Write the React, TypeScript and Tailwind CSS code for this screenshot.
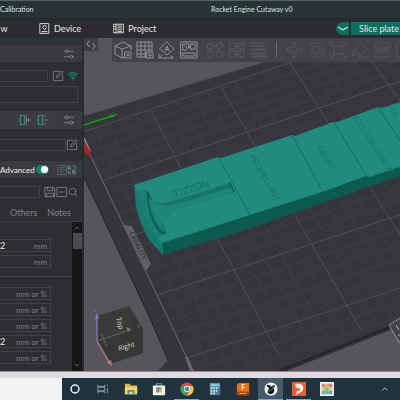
import type { ReactNode } from "react";
import { ChevronDown, ChevronUp, Search } from "lucide-react";

type Point = [number, number];

// Endpoints of the major plate lines, back edge to front edge
const COLUMNS: [Point, Point][] = [
    [[80, 133], [187, 358]],
    [[151, 111], [266, 331]],
    [[221, 87], [348, 307]],
    [[290, 63], [428, 278]],
    [[358, 41], [506, 252]],
    [[424, 18], [582, 228]],
];
const ROWS = [0, 0.21, 0.46, 0.72, 1];

const mix = (a: number, b: number, t: number) => a + (b - a) * t;

function platePoint(u: number, t: number): Point {
    const i = Math.min(Math.floor(u), COLUMNS.length - 2);
    const f = u - i;
    const [a, b] = COLUMNS[i];
    const [c, d] = COLUMNS[i + 1];
    return [
        mix(mix(a[0], b[0], t), mix(c[0], d[0], t), f),
        mix(mix(a[1], b[1], t), mix(c[1], d[1], t), f),
    ];
}

function PlateGrid() {
    const lines: { from: Point; to: Point; major: boolean }[] = [];
    for (let i = 0; i <= 25; i++) {
        lines.push({ from: platePoint(i / 5, 0), to: platePoint(i / 5, 1.11), major: i % 5 === 0 });
    }
    for (let i = 0; i <= 22; i++) {
        const r = Math.floor(i / 5);
        const t = i > 20 ? 1 + (i - 20) * 0.055 : r === 4 ? 1 : mix(ROWS[r], ROWS[r + 1], (i % 5) / 5);
        lines.push({ from: platePoint(0, t), to: platePoint(5, t), major: i % 5 === 0 });
    }
    return (
        <g>
            {lines.map(({ from, to, major }, i) => (
                <line
                    key={i}
                    x1={from[0]}
                    y1={from[1]}
                    x2={to[0]}
                    y2={to[1]}
                    stroke={major ? "#535158" : "#47454c"}
                    strokeWidth={major ? 0.9 : 0.6}
                />
            ))}
        </g>
    );
}

function Model() {
    return (
        <g>
            <path d="M134 185L137 207L146 233L152 244L163 255L242 231L400 176V160L300 150L160 200Z" fill="#0d5b50" />
            <path d="M134 185L136 207Q140 224 150 241L163 255L162 242L158 238L150 222L140 190Z" fill="#177c6f" />
            <path
                d="M134 185L218 157L221 158L292 135L295 136L333 122L337 122L378 107L382 108L400 102V167L369 177L366 176L325 191L322 192L253 214L250 215L162 243L158 239L160 235L167 233L163 225L148 191L138 192Z"
                fill="#208c7d"
            />
            <path d="M138 192L147 190L149 198L153 204L161 223L167 233L161 235L158 239C148 228 141 212 138 192Z" fill="#1a8073" />
            <path d="M147 190L149 198C149 210 155 223 161 230L167 233L161 235C152 224 146 208 147 190Z" fill="#0f6056" />
            <path d="M149 198L153 201C160 204 166 203 173 201L230 183L234 192L176 209C171 211 169 215 166 219L161 224C156 218 151 210 149 198Z" fill="#1f8577" />
            <path d="M153 201C160 204 166 203 173 201L230 183L232 187L174 205C166 207 159 206 153 201Z" fill="#187469" />
            <path d="M166 219C169 215 171 211 176 209L234 192" fill="none" stroke="#1b7b6f" strokeWidth="0.6" />
            <path d="M230 183L234 192" stroke="#0d5249" strokeWidth="1.2" />
            <path d="M218 157L250 215M292 135L323 192M334 122L367 177M378 107L404 147" fill="none" stroke="#126358" strokeWidth="0.8" />
            <g fill="#1a7166" className="font-['Liberation_Sans']">
                <text transform="translate(208 180) rotate(163)" fontSize="10">NOZZLE</text>
                <text transform="translate(249 156) rotate(60)" fontSize="8">PROPELLANT</text>
                <text transform="translate(317 148) rotate(58)" fontSize="8">DELAY</text>
                <text transform="translate(353 118) rotate(57)" fontSize="7">EJECTION CHARGE</text>
                <text transform="translate(390 110) rotate(57)" fontSize="6">CO</text>
            </g>
        </g>
    );
}

function ViewCube() {
    return (
        <g>
            <path d="M97 316L129 306L143 329L143 353L110 364L97 341Z" fill="#3a3b39" />
            <path d="M97 341L110 364L143 353V329L129 306L132 328Z" fill="#373836" />
            <path d="M97 341L130 330M101 334L107 346M138 328L140 324" fill="none" stroke="#6c736d" strokeWidth="0.8" />
            <path d="M126 327L131 329L128 332Z" fill="#6c8070" />
            <path d="M97 341V317" stroke="#8079c8" strokeWidth="1.3" />
            <path d="M97 313L99 319H95Z" fill="#8079c8" />
            <path d="M97 341L109 362" stroke="#c97f7b" strokeWidth="1.3" />
            <path d="M112 366L107 362L111 360Z" fill="#c97f7b" />
            <g className="font-['Open_Sans']" fill="#d6d6d2">
                <text x="94" y="312" fontSize="6" fill="#8079c8">z</text>
                <text transform="translate(116 318) rotate(76)" fontSize="7">Top</text>
                <text transform="translate(119 351) rotate(-16)" fontSize="7">Right</text>
            </g>
        </g>
    );
}

function Scene() {
    return (
        <svg
            viewBox="84 38 316 333"
            preserveAspectRatio="xMinYMin slice"
            className="absolute inset-0 size-full"
            role="img"
            aria-label="Build plate"
        >
            <rect x="84" y="38" width="316" height="333" fill="#57555b" />
            <path d="M84 116L265 62L345 38H400V326L282 371H158L168 360L150 318L84 177Z" fill="#37353c" />
            <path d="M84 177L150 318L168 360" fill="none" stroke="#29272d" strokeWidth="1.2" />
            <path d="M276 371L400 322V326L286 371Z" fill="#242328" />
            <path d="M282 371L400 325" stroke="#3f3e43" strokeWidth="0.7" />
            <PlateGrid />
            <path d="M90 155L187 358L193 371" fill="none" stroke="#68666b" strokeWidth="0.9" />
            <path d="M185 357L188 357L194 371H190Z" fill="#69676b" />
            <path d="M123 225L132 226L151 264L146 271Z" fill="#605f64" />
            <text transform="translate(129 233) rotate(64)" fontSize="7" fill="#29282d" className="font-['Open_Sans']">
                CREALITY
            </text>
            <path d="M84 125L112 116" stroke="#0aa80f" strokeWidth="1.6" />
            <path d="M118 114L111 118L110 115Z" fill="#0aa80f" />
            <path d="M84 138L90 151" stroke="#8d8b8e" strokeWidth="1.4" />
            <path d="M84 143L89 149L91 157L86 154L84 149Z" fill="#b31d1c" />
            <Model />
            <path d="M404 316L390 324Q389 325 390 327L399 342H404Z" fill="#444348" stroke="#a09fa3" strokeWidth="0.9" />
            <path d="M396 325L399 330M398 336L402 333" stroke="#b5b4b8" strokeWidth="1" />
            <ViewCube />
        </svg>
    );
}

function Icon({ children, className = "size-3" }: { children: ReactNode; className?: string }) {
    return (
        <svg
            viewBox="0 0 18 18"
            fill="none"
            stroke="currentColor"
            strokeWidth="1"
            strokeLinecap="round"
            strokeLinejoin="round"
            className={`shrink-0 ${className}`}
            aria-hidden="true"
        >
            {children}
        </svg>
    );
}

const tools = [
    { name: "Add", body: <path d="M10 16L8 17L1 13V5L9 1L17 5V9M1 5L8 8L17 5M8 8V17M11 11H17V17H11ZM14 12.500V15.500M12.500 14H15.500" /> },
    { name: "Add plate", body: <path d="M10 16H1V1H16V10M5 1V16M9 1V16M13 1V10M1 5H16M1 9H16M1 13H10M11 11H17V17H11ZM14 12.500V15.500M12.500 14H15.500" /> },
    { name: "Auto orient", body: <path d="M9 1L16 8L9 14L2 8ZM7 10L9 5L11 10M7.500 8.500H10.500M1 13V17H15M1 17L4 14M13 15L15 17L13 18" /> },
    { name: "Arrange", body: <path d="M1 1H17V17H1ZM3 3H9V6L6 9H3ZM11 3H15V8H11ZM3 12H15V15H3ZM5 5L8 8M8 5L12 9" /> },
];

const dimTools = [
    { name: "Split to objects", body: <path d="M2 3H7V8H2ZM11 3L15 1L17 5L12 8ZM2 11H7V16H2ZM11 11H16V16H11ZM7 5H11M4 8V11M13 8V11" /> },
    { name: "Split to parts", body: <path d="M2 2H8V8H2ZM10 2H16V8H10ZM2 10H8V16H2ZM10 10H16V16H10ZM5 5H13M5 13H13" /> },
    { name: "Layer height", body: <path d="M1 2H17M1 5H17M1 8H17M1 9H17M1 12H17M1 13H17M1 16H17M1 15H17" /> },
];

const editTools = [
    { name: "Move", body: <path d="M6 6H12V12H6ZM9 1V4M9 14V17M1 9H4M14 9H17M7 3L9 1L11 3M7 15L9 17L11 15M3 7L1 9L3 11M15 7L17 9L15 11" /> },
    { name: "Rotate", body: <path d="M3 5A7.500 7.500 0 1 1 3 13M3 1V5H7M9 5L13 7V11L9 13L5 11V7Z" /> },
    { name: "Scale", body: <path d="M5 5H13V13H5ZM1 5V1H5M13 1H17V5M17 13V17H13M5 17H1V13M1 1L5 5M17 1L13 5M1 17L5 13M17 17L13 13" /> },
    { name: "Lay on face", body: <path d="M10 2L16 8L9 14L4 9ZM2 9L1 14H6M7 16H17M4 9L2 11" /> },
    { name: "Cut", body: <path d="M2 2H16V7H2ZM2 11H16V16H2ZM1 9H17" /> },
    { name: "Support", body: <path d="M2 2H16V16H2ZM6 2V16" /> },
];

function Toolbar() {
    return (
        <div className="ml-3.5 flex h-6 min-w-0 flex-1 items-center gap-1 overflow-hidden bg-[#424247] pl-0.5">
            {tools.map((tool) => (
                <button key={tool.name} aria-label={tool.name} className="text-[#919195]">
                    <Icon className="size-[18px]">{tool.body}</Icon>
                </button>
            ))}
            <div className="ml-1 flex gap-1">
                {dimTools.map((tool) => (
                    <button key={tool.name} aria-label={tool.name} className="text-[#57575c]">
                        <Icon className="size-[18px]">{tool.body}</Icon>
                    </button>
                ))}
            </div>
            <div className="mx-1 h-4 w-px shrink-0 bg-[#68686d]" />
            {editTools.map((tool) => (
                <button key={tool.name} aria-label={tool.name} className="text-[#545459]">
                    <Icon className="size-[18px]">{tool.body}</Icon>
                </button>
            ))}
        </div>
    );
}

const SlidersIcon = () => (
    <Icon>
        <path d="M2 5H3M8 5H16M2 13H10M15 13H16" />
        <circle cx="5.500" cy="5" r="2.300" />
        <circle cx="12.500" cy="13" r="2.300" />
    </Icon>
);

const EditIcon = () => (
    <Icon>
        <path d="M11 2H2V16H16V7M7 11L8 8L15 1L17 3L10 10Z" />
    </Icon>
);

function IconButton({ label, children }: { label: string; children: ReactNode }) {
    return (
        <button aria-label={label} className="shrink-0 text-[#9a9a9d]">
            {children}
        </button>
    );
}

const fieldGroups = [
    [
        { name: "Layer height", value: "2", unit: "mm" },
        { name: "First layer height", value: "", unit: "mm" },
    ],
    [
        { name: "Default", value: "", unit: "mm or %" },
        { name: "First layer", value: "", unit: "mm or %" },
        { name: "Outer wall", value: "", unit: "mm or %" },
        { name: "Inner wall", value: "2", unit: "mm or %" },
        { name: "Top surface", value: "", unit: "mm or %" },
    ],
];

function Sidebar() {
    return (
        <aside className="flex w-[84px] shrink-0 flex-col border-r-2 border-[#24302f] bg-[#2d2d32]">
            <div className="h-[7px] bg-[#283435]" />
            <div className="flex h-[17px] items-center justify-end bg-[#3a3a3f] pr-[7px]">
                <IconButton label="Printer settings"><SlidersIcon /></IconButton>
            </div>
            <div className="mt-2 flex h-3 items-center gap-1 pr-1">
                <select aria-label="Printer" className="h-3 w-[51px] appearance-none border border-l-0 border-[#414146]" />
                <IconButton label="Edit printer"><EditIcon /></IconButton>
                <button aria-label="Connection" className="text-[#12806e]">
                    <Icon className="size-2.5">
                        <path d="M1 6Q9 -1 17 6M4 9Q9 4 14 9M7 12Q9 10 11 12M9 13V16" strokeWidth="2.500" />
                    </Icon>
                </button>
            </div>
            <div className="mt-1 mr-1 h-[17px] border border-l-0 border-[#414146]" />
            <div className="mt-2 flex h-[18px] items-center justify-end gap-1.5 bg-[#3a3a3f] pr-[7px]">
                <IconButton label="Add filament">
                    <Icon><path d="M6 2H2V16H6M8 2V16" stroke="#2aa08c" strokeWidth="1.500" /><path d="M11 2V16M11 9H17M14 6V12" /></Icon>
                </IconButton>
                <IconButton label="Remove filament">
                    <Icon><path d="M6 2H2V16H6M8 2V16" stroke="#2aa08c" strokeWidth="1.500" /><path d="M10 3H13M10 9H17M10 15H13" /></Icon>
                </IconButton>
                <span className="w-0.5" />
                <IconButton label="Filament settings"><SlidersIcon /></IconButton>
            </div>
            <div className="mt-[9px] flex h-[13px] items-center">
                <select aria-label="Filament" className="h-3 w-[66px] shrink-0 appearance-none border border-l-0 border-[#414146]" />
                <IconButton label="Edit filament"><EditIcon /></IconButton>
            </div>
            <div className="mt-2.5 flex h-[17px] items-center bg-[#3a3a3f]">
                <label className="flex items-center gap-0.5 text-[8px] text-[#f0f0f0]">
                    <span className="w-[34px]">Advanced</span>
                    <input type="checkbox" defaultChecked className="peer sr-only" />
                    <span className="flex h-[9px] w-[13px] items-center justify-end rounded-full bg-[#12806e] pr-px">
                        <span className="size-[7px] rounded-full bg-white" />
                    </span>
                </label>
                <button aria-label="Compare presets" className="ml-2 text-[#5f8d85]">
                    <Icon className="size-2.5"><path d="M1 1H17V17H1ZM5 5H13M5 9H13M5 13H10" /></Icon>
                </button>
                <button aria-label="Search objects" className="text-[#5f9d91]">
                    <Icon className="size-2.5"><path d="M2 8V4L4 1L6 4V8M2 6H6M11 2H15V6M3 11V15H7M11 9H14V12H11ZM11 12H15V16H11Z" strokeWidth="1.500" /></Icon>
                </button>
            </div>
            <div className="mt-2 flex h-3 items-center">
                <select aria-label="Process" className="mr-1 h-3 w-10 appearance-none border border-l-0 border-[#414146]" />
                <IconButton label="Save"><Icon><path d="M2 2H14L16 4V16H2ZM5 2V7H13V2M4 16V11H14V16" /></Icon></IconButton>
                <IconButton label="Delete"><Icon><path d="M2 2H16V16H2ZM5 9H13" /></Icon></IconButton>
                <IconButton label="Search"><Search className="size-2.5" strokeWidth={1.5} /></IconButton>
            </div>
            <div className="mt-1.5 flex h-[18px] items-center gap-2.5 border-b border-[#3c3c41] pl-2.5 text-[9px] text-[#828287]">
                <button>Others</button>
                <button>Notes</button>
            </div>
            <div className="flex min-h-0 flex-1 overflow-hidden">
                <div className="min-w-0 flex-1 pt-[17px]">
                    {fieldGroups.map((fields, i) => (
                        <div key={i} className={i > 0 ? "mt-2 border-t border-[#434348] pt-2.5" : ""}>
                            {fields.map((field) => (
                                <label key={field.name} className="mb-[3px] flex h-[13px] w-[51px] items-center border border-l-0 border-[#414146] pr-[3px] text-[8px] text-[#808085]">
                                    <input aria-label={field.name} defaultValue={field.value} className="w-0 min-w-0 flex-1 text-[9px] text-[#ececec] outline-none" />
                                    <span className="whitespace-nowrap">{field.unit}</span>
                                </label>
                            ))}
                        </div>
                    ))}
                </div>
                <div className="flex w-2.5 flex-col items-center bg-[#161618] text-[#85858a]">
                    <ChevronUp className="mt-0.5 size-2" />
                    <div className="mt-px h-4 w-[9px] bg-[#4b4b50]" />
                    <ChevronDown className="mt-auto mb-0.5 size-2" />
                </div>
            </div>
        </aside>
    );
}

function NavBar() {
    return (
        <nav className="flex h-[19px] items-center bg-[#2c2c30] text-[9px] text-[#e6e6e6]">
            <button aria-label="Preview" className="w-2">w</button>
            <button className="ml-[31px] flex items-center gap-1">
                <Icon className="size-[11px]">
                    <path d="M2 1H16V17H2ZM5 14H13" strokeWidth="1.500" />
                    <path d="M9 11L6 7A3 3 0 1 1 12 7Z" strokeWidth="1.500" />
                </Icon>
                Device
            </button>
            <button className="ml-8 flex items-center gap-1">
                <Icon className="size-[11px]">
                    <path d="M1 2H17V16H1ZM5 2V16M8 5H14M8 8H14M8 11H14M8 14H14M2 6H4M2 10H4" strokeWidth="1.500" />
                </Icon>
                Project
            </button>
            <div className="ml-auto flex h-[13px] shrink-0 gap-0.5 whitespace-nowrap">
                <button aria-label="Slice options" className="flex w-[13px] items-center justify-center rounded-l-full bg-[#08705f]">
                    <Icon className="size-2.5"><path d="M1 6Q5 8 9 11Q13 8 17 6" strokeWidth="2" /></Icon>
                </button>
                <button className="bg-[#08705f] pr-px pl-2">Slice plate</button>
            </div>
        </nav>
    );
}

function AppIcon({ children }: { children: ReactNode }) {
    return (
        <svg viewBox="0 0 16 16" className="size-3.5" aria-hidden="true">
            {children}
        </svg>
    );
}

const apps = [
    { name: "Cortana", state: "", icon: <circle cx="8" cy="8" r="4.500" fill="none" stroke="#f2f5f6" strokeWidth="1.700" /> },
    { name: "Task view", state: "", icon: <path d="M2 3V5H10V3M2 13V11H10V13M2 6H10V10H2ZM13 3V5M13 7V13" fill="none" stroke="#9ba7ad" strokeWidth="1" /> },
    {
        name: "File Explorer",
        state: "",
        icon: (
            <>
                <path d="M1 2H6L8 4H15V14H1Z" fill="#e9b73c" />
                <path d="M1 6H15V14H1Z" fill="#f9d562" />
                <path d="M4 9H12V14H10V11H6V14H4Z" fill="#398dbb" />
            </>
        ),
    },
    {
        name: "Store",
        state: "",
        icon: (
            <>
                <path d="M5 5V2H11V5" fill="none" stroke="#43a4d2" strokeWidth="1.200" />
                <path d="M1 4H15V14Q15 15 14 15H2Q1 15 1 14Z" fill="#f0f3f4" />
                <path d="M5 6H8V9H5Z" fill="#e65536" />
                <path d="M8 6H11V9H8Z" fill="#7daf37" />
                <path d="M5 9H8V12H5Z" fill="#299bdb" />
                <path d="M8 9H11V12H8Z" fill="#eeb62c" />
            </>
        ),
    },
    {
        name: "Chrome",
        state: "open",
        icon: (
            <>
                <circle cx="8" cy="8" r="7.500" fill="#e04a3b" />
                <path d="M1.500 4.500L8 8L8 15.500A7.500 7.500 0 0 1 1.500 4.500Z" fill="#35a354" />
                <path d="M8 4.500H14.600A7.500 7.500 0 0 1 8 15.500L11.200 10Z" fill="#f5c735" />
                <circle cx="8" cy="8" r="3.600" fill="#f4f4f4" />
                <circle cx="8" cy="8" r="2.700" fill="#4280df" />
            </>
        ),
    },
    {
        name: "Calculator",
        state: "",
        icon: (
            <>
                <path d="M2 1H14V15H2Z" fill="#597e90" />
                <path d="M3 2H13V5H3Z" fill="#71cce5" />
                <path d="M3 6H5V8H3ZM6 6H8V8H6ZM9 6H11V8H9ZM3 9H5V11H3ZM6 9H8V11H6ZM9 9H11V11H9ZM3 12H5V14H3ZM6 12H8V14H6Z" fill="#d6e3e8" />
                <path d="M11 9H13V14H11Z" fill="#2475b9" />
            </>
        ),
    },
    {
        name: "Fusion",
        state: "",
        icon: (
            <>
                <path d="M3 1H15V14L13 15H1V3Z" fill="#ef6c10" />
                <path d="M1 11H15V15H1Z" fill="#a9410b" />
                <text x="6" y="9" fontSize="8" fontWeight="700" fill="#fff3e5">F</text>
                <path d="M4 13H12" stroke="#e2b197" strokeWidth="1" />
            </>
        ),
    },
    {
        name: "OrcaSlicer",
        state: "active",
        icon: (
            <>
                <circle cx="8" cy="8" r="7.500" fill="#f3f5f5" />
                <path d="M3 3L8 4L7 6L12 3Q13 5 11 7Q13 10 10 13Q6 15 4 12Q4 9 6 7Q3 6 3 3Z" fill="#14191c" />
                <path d="M5 11Q9 10 11 5" fill="none" stroke="#2ca18c" strokeWidth="1" />
            </>
        ),
    },
    {
        name: "PowerPoint",
        state: "open",
        icon: (
            <>
                <path d="M0 0H16V16H0Z" fill="#e95d36" />
                <path d="M4 2H9Q13 3 13 7Q13 11 9 12L4 15L6 10H9V7H6L4 5Z" fill="#fff4ec" />
            </>
        ),
    },
    {
        name: "Palette",
        state: "",
        icon: (
            <>
                <path d="M0 0H16V16H0Z" fill="#e8eeee" />
                <path d="M2 2H6V6H2Z" fill="#e9867a" />
                <path d="M6 2H10V6H6Z" fill="#f1ad70" />
                <path d="M10 2H14V6H10Z" fill="#dd7771" />
                <path d="M2 6H6V10H2Z" fill="#e4c45d" />
                <path d="M6 6H10V10H6Z" fill="#80bb72" />
                <path d="M10 6H14V10H10Z" fill="#e9cf65" />
                <path d="M2 10H6V14H2Z" fill="#70aed1" />
                <path d="M6 10H10V14H6Z" fill="#65b8b1" />
                <path d="M10 10H14V14H10Z" fill="#6d9ece" />
            </>
        ),
    },
];

const appStates: Record<string, string> = {
    "": "border-transparent",
    open: "border-[#6daae0]",
    active: "border-[#6daae0] bg-[#475a68]",
};

function Taskbar() {
    return (
        <footer className="flex h-[22px] items-stretch bg-[#1f323e]">
            <input aria-label="Search Windows" className="w-[62px] shrink-0 bg-[#f3f3f3]" />
            <div className="flex gap-[3px]">
                {apps.map((app) => (
                    <button key={app.name} aria-label={app.name} className={`flex w-[25px] items-center justify-center border-b ${appStates[app.state]}`}>
                        <AppIcon>{app.icon}</AppIcon>
                    </button>
                ))}
            </div>
            <button aria-label="Show hidden icons" className="mr-2.5 ml-auto text-[#c5ced3]">
                <ChevronUp className="size-2.5" strokeWidth={2} />
            </button>
        </footer>
    );
}

export default function App() {
    return (
        <div className="flex h-screen flex-col overflow-hidden bg-[#2d2d32] font-[Lato,sans-serif]">
            <header className="flex h-[19px] items-center border-t border-b border-t-[#526662] border-b-[#222a2b] bg-[#283335] text-[7px] text-[#dfe3e3]">
                <button>Calibration</button>
                <h1 className="flex-1 pl-[70px] text-center whitespace-nowrap">Rocket Engine Cutaway v0</h1>
            </header>
            <NavBar />
            <div className="flex min-h-0 flex-1">
                <Sidebar />
                <main className="relative min-w-0 flex-1 overflow-hidden">
                    <Scene />
                    <div className="relative flex items-start">
                        <button aria-label="Collapse sidebar" className="flex h-[13px] w-3.5 items-center justify-center bg-[#3d3d42] text-[#a9a9ad]">
                            <Icon className="size-2.5"><path d="M6 2L1 7L6 12M12 6L17 11L12 16" strokeWidth="1.700" /></Icon>
                        </button>
                        <Toolbar />
                    </div>
                </main>
            </div>
            <div className="h-[7px] border-t border-[#8f8b90] bg-[#dedadd]" />
            <Taskbar />
        </div>
    );
}
